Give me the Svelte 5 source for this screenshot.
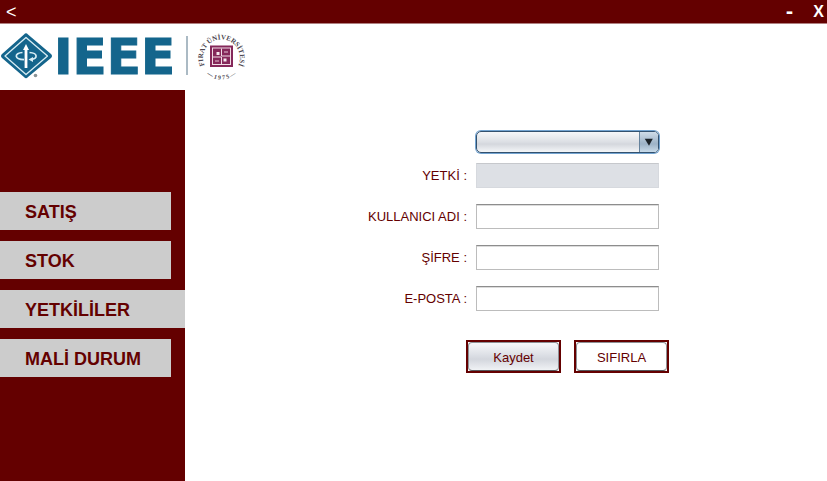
<script>
  const sections = ['SATIŞ', 'STOK', 'YETKİLİLER', 'MALİ DURUM'];
  let active = $state('YETKİLİLER');
  let role = $state('');
  let form = $state({ user: '', password: '', email: '' });

  function reset() {
    form = { user: '', password: '', email: '' };
  }
</script>

<div class="app">
  <header class="titlebar">
    <button class="win" aria-label="Geri">&lt;</button>
    <div class="controls">
      <button class="win minus" aria-label="Küçült">-</button>
      <button class="win close" aria-label="Kapat">X</button>
    </div>
  </header>

  <div class="brand">
    <svg width="250" height="66" viewBox="0 24 250 66" role="img" aria-label="IEEE Fırat Üniversitesi">
      <path d="M24 34.500Q26 32 28 34.500L51 54Q53 56 51 58L28 77Q26 79.500 24 77L2 58Q0 56 2 54Z" fill="#14658c" />
      <path d="M26 37.500L47.500 56L26 74.500L5 56Z" fill="none" stroke="#d8edf4" stroke-width="1.300" stroke-linejoin="round" />
      <path d="M26 44L29 50H27.400V68H24.600V50H23Z" fill="#fff" />
      <path d="M22.500 52.500C14 53 14 59.500 24 59.700M29.500 52.500C38 53 38 58.500 31 59.500" fill="none" stroke="#d8edf4" stroke-width="1.700" />
      <path d="M28.500 59.500L33 57V62Z" fill="#d8edf4" />
      <circle cx="35.500" cy="75.500" r="1.800" fill="#8a9396" />
      <text class="wordmark" x="54" y="74">IEEE</text>
      <path d="M187 36V75" stroke="#8fa3b0" stroke-width="1.500" />
      <defs>
        <path id="ring-top" d="M207.500 70A18.500 18.500 0 1 1 235.500 70" />
        <path id="ring-bottom" d="M201 67A23 23 0 0 0 242 67" />
      </defs>
      <text class="ring"><textPath href="#ring-top" startOffset="50%" text-anchor="middle">FIRAT ÜNİVERSİTESİ</textPath></text>
      <text class="ring year"><textPath href="#ring-bottom" startOffset="50%" text-anchor="middle">— 1 9 7 5 —</textPath></text>
      <rect x="210" y="45.500" width="23" height="21.500" fill="#85285a" />
      <rect x="212.500" y="48" width="18" height="16.500" fill="none" stroke="#f1dce5" stroke-width="1" />
      <path d="M221.500 48.500V56H231M212.500 57H221.500V64" fill="none" stroke="#f1dce5" stroke-width="1" />
      <path d="M216.500 52H219.500V55H216.500ZM223.500 58.500H226.500V61.500H223.500Z" fill="#f6e8ee" />
      <path d="M224 52H228M215 61H219" fill="none" stroke="#e3c2d1" stroke-width="1.200" />
    </svg>
  </div>

  <div class="body">
    <nav>
      {#each sections as name}
        <button class="item" class:active={active === name} onclick={() => (active = name)}>{name}</button>
      {/each}
    </nav>

    <main>
      <form onsubmit={(e) => e.preventDefault()}>
        <div class="combo">
          <select bind:value={role} aria-label="Yetki seçimi">
            <option value=""></option>
          </select>
          <svg class="arrow" width="19" height="20" viewBox="0 0 19 20" aria-hidden="true">
            <path d="M5 6.500H13.500L9.500 14Z" fill="#1b2228" />
          </svg>
        </div>
        <div class="fields">
          <label for="role">YETKİ :</label>
          <input id="role" type="text" value={role} disabled />
          <label for="user">KULLANICI ADI :</label>
          <input id="user" type="text" bind:value={form.user} />
          <label for="password">ŞİFRE :</label>
          <input id="password" type="password" bind:value={form.password} />
          <label for="email">E-POSTA :</label>
          <input id="email" type="text" bind:value={form.email} />
        </div>
        <div class="actions">
          <div class="frame"><button class="save" type="submit">Kaydet</button></div>
          <div class="frame"><button type="button" onclick={reset}>SIFIRLA</button></div>
        </div>
      </form>
    </main>
  </div>
</div>

<style>
  :global(body) {
    margin: 0;
    background: #fff;
  }
  .app {
    display: flex;
    flex-direction: column;
    min-height: 100vh;
    font-family: 'Liberation Sans', Arial, sans-serif;
    font-size: 13px;
    color: #640000;
  }
  button,
  input,
  select {
    box-sizing: border-box;
    margin: 0;
    font: inherit;
    color: inherit;
  }
  .titlebar {
    display: flex;
    justify-content: space-between;
    align-items: center;
    height: 24px;
    padding: 0 3px 0 6px;
    background: #640000;
    border-bottom: 1px solid #b08080;
    box-sizing: border-box;
  }
  .controls {
    display: flex;
    align-items: center;
    gap: 20px;
  }
  .win {
    padding: 0;
    border: 0;
    background: none;
    color: #fff;
    font-size: 18px;
    line-height: 22px;
  }
  .minus {
    font-family: 'DejaVu Sans', sans-serif;
    font-weight: bold;
  }
  .close {
    font-size: 16px;
    font-weight: bold;
  }
  .brand {
    height: 66px;
  }
  .brand svg {
    display: block;
  }
  .wordmark {
    font: bold 50px 'DejaVu Sans', sans-serif;
    fill: #14658c;
    stroke: #14658c;
    stroke-width: 1px;
  }
  .ring {
    font: bold 7px 'Liberation Serif', serif;
    fill: #4b4650;
  }
  .year {
    font-size: 6px;
  }
  .body {
    display: flex;
    flex: 1;
  }
  nav {
    display: flex;
    flex-direction: column;
    align-items: flex-start;
    gap: 11px;
    width: 185px;
    flex: none;
    box-sizing: border-box;
    padding: 102px 0 24px;
    background: #640000;
  }
  .item {
    width: 171px;
    height: 38px;
    padding: 2px 0 0 25px;
    border: 0;
    background: #ccc;
    font-size: 18px;
    font-weight: bold;
    text-align: left;
  }
  .item.active {
    width: 100%;
  }
  main {
    flex: 1;
    padding: 41px 24px 24px 183px;
  }
  form {
    width: 301px;
  }
  .combo {
    position: relative;
    width: 183px;
    margin: 0 0 10px 108px;
  }
  select {
    display: block;
    appearance: none;
    width: 100%;
    height: 22px;
    border: 1px solid #33516e;
    border-radius: 5px;
    outline: none;
    background: linear-gradient(#f6f7f9, #dcdfe4 50%, #d4d7dd 60%, #f4f6f8);
    box-shadow: 0 0 0 1px #73a4d1;
  }
  .arrow {
    position: absolute;
    top: 1px;
    right: 1px;
    border-left: 1px solid #65829c;
    border-radius: 0 4px 4px 0;
    background: linear-gradient(#cfdce8, #a3b8cb 50%, #9db3c7 60%, #c8dbea);
    box-sizing: border-box;
    pointer-events: none;
  }
  .fields {
    display: grid;
    grid-template-columns: 99px 183px;
    column-gap: 9px;
    row-gap: 16px;
    align-items: center;
  }
  label {
    text-align: right;
    white-space: nowrap;
  }
  input {
    width: 100%;
    height: 25px;
    padding: 0 6px;
    border: 1px solid #bcbcbc;
    border-top-color: #8d8d8d;
    background: #fff;
    box-shadow: inset 0 1px #dcdcdc;
  }
  input:disabled {
    border-color: #d6d9de;
    border-top-color: #c6c8cc;
    background: #dde0e5;
    box-shadow: none;
  }
  .actions {
    display: flex;
    gap: 13px;
    margin: 29px 0 0 98px;
  }
  .frame {
    box-sizing: border-box;
    width: 95px;
    height: 33px;
    border: 2px solid #640000;
    background: #fff;
  }
  .frame button {
    display: block;
    width: 100%;
    height: 100%;
    padding: 1px 0 0;
    border: 1px solid #8e9297;
    border-bottom-color: #55585c;
    border-radius: 4px;
    background: #fff;
  }
  .frame .save {
    background: linear-gradient(#f7f8fa, #dcdfe5 45%, #d3d6dd 60%, #f0f2f5);
  }
</style>
